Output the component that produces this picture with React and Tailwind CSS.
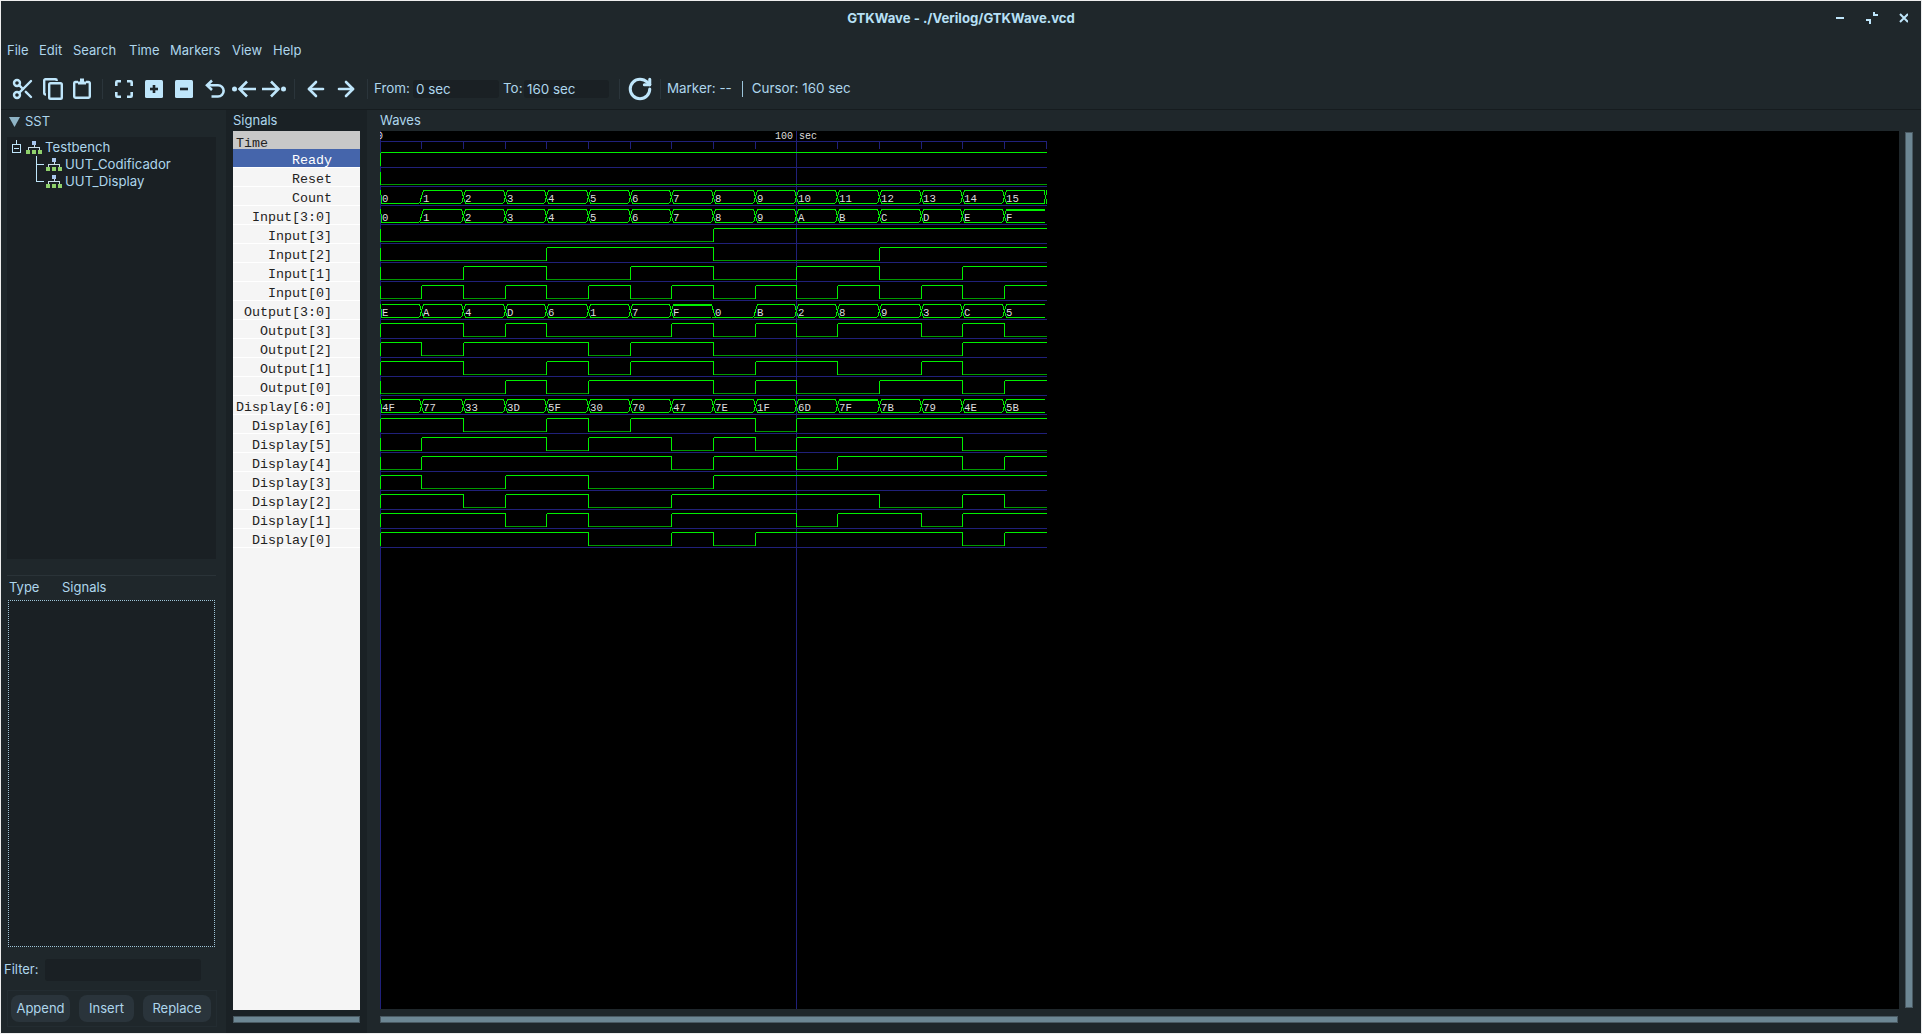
import React from "react";
import { Scissors, RotateCw, ArrowLeft, ArrowRight } from "lucide-react";

const IC = "#bfe6fb";
const XS = [0, 41, 83, 125, 166, 208, 250, 291, 333, 375, 416, 457, 499, 541, 582, 624, 666];
const HIGH = "#00f000";
const LOW = "#009a00";
const BLUE = "#20207a";
const MONO = "'Liberation Mono', monospace";

const input = [...Array(16).keys()];
const output = [0xe, 0xa, 4, 0xd, 6, 1, 7, 0xf, 0, 0xb, 2, 8, 9, 3, 0xc, 5];
const display = [0x4f, 0x77, 0x33, 0x3d, 0x5f, 0x30, 0x70, 0x47, 0x7e, 0x1f, 0x6d, 0x7f, 0x7b, 0x79, 0x4e, 0x5b];
const hex = (v) => v.toString(16).toUpperCase();
const bit = (arr, b) => arr.map((v) => (v >> b) & 1);

const rows = [
  { name: "Ready", d: Array(16).fill(1) },
  { name: "Reset", d: Array(16).fill(0) },
  { name: "Count", v: input, t: input.map(String), cont: true },
  { name: "Input[3:0]", v: input, t: input.map(hex), max: 15 },
  { name: "Input[3]", d: bit(input, 3) },
  { name: "Input[2]", d: bit(input, 2) },
  { name: "Input[1]", d: bit(input, 1) },
  { name: "Input[0]", d: bit(input, 0) },
  { name: "Output[3:0]", v: output, t: output.map(hex), max: 15 },
  { name: "Output[3]", d: bit(output, 3) },
  { name: "Output[2]", d: bit(output, 2) },
  { name: "Output[1]", d: bit(output, 1) },
  { name: "Output[0]", d: bit(output, 0) },
  { name: "Display[6:0]", v: display, t: display.map(hex), max: 127 },
  { name: "Display[6]", d: bit(display, 6) },
  { name: "Display[5]", d: bit(display, 5) },
  { name: "Display[4]", d: bit(display, 4) },
  { name: "Display[3]", d: bit(display, 3) },
  { name: "Display[2]", d: bit(display, 2) },
  { name: "Display[1]", d: bit(display, 1) },
  { name: "Display[0]", d: bit(display, 0) },
];

function Digital({ d, yb }) {
  const hi = yb - 15;
  const lo = yb - 2;
  const parts = [];
  parts.push(<line key="s" x1={0.5} x2={0.5} y1={hi} y2={lo} stroke={HIGH} />);
  d.forEach((b, i) => {
    const x1 = XS[i] + 0.5;
    const x2 = i === 15 ? 667 : XS[i + 1] + 0.5;
    parts.push(<line key={"h" + i} x1={x1} x2={x2} y1={b ? hi : lo} y2={b ? hi : lo} stroke={b ? HIGH : LOW} />);
    if (i > 0 && d[i - 1] !== b) parts.push(<line key={"v" + i} x1={x1} x2={x1} y1={hi} y2={lo} stroke={HIGH} />);
  });
  return <g>{parts}</g>;
}

function Vector({ r, yb }) {
  const top = yb - 15;
  const bot = yb - 2;
  const parts = [];
  const tops = r.v.map((v) => (v === 0 ? bot : top));
  r.v.forEach((v, i) => {
    const a = XS[i] + 2;
    const b = i === 15 ? 665 : XS[i + 1] - 2;
    parts.push(<line key={"b" + i} x1={a} x2={b} y1={bot} y2={bot} stroke={HIGH} />);
    if (v !== 0) parts.push(<line key={"t" + i} x1={a} x2={b} y1={top} y2={top} stroke={HIGH} />);
    if (v === r.max) parts.push(<line key={"th" + i} x1={a} x2={b} y1={top + 1} y2={top + 1} stroke={HIGH} />);
    if (i > 0) {
      const x = XS[i] + 0.5;
      parts.push(<line key={"x1" + i} x1={x - 2} x2={x + 2} y1={tops[i - 1]} y2={bot} stroke={HIGH} />);
      parts.push(<line key={"x2" + i} x1={x - 2} x2={x + 2} y1={bot} y2={tops[i]} stroke={HIGH} />);
    }
    parts.push(
      <text key={"l" + i} x={XS[i] + 2} y={yb - 4} fontSize="10.67" fill="#dddddd" fontFamily={MONO}>
        {r.t[i]}
      </text>
    );
  });
  parts.push(<line key="s1" x1={0.5} x2={2} y1={top} y2={bot} stroke={HIGH} />);
  parts.push(<line key="s2" x1={0.5} x2={2} y1={bot} y2={bot} stroke={HIGH} />);
  if (r.cont) {
    parts.push(<line key="c1" x1={664} x2={667} y1={top} y2={bot} stroke={HIGH} />);
    parts.push(<line key="c2" x1={664} x2={667} y1={bot} y2={top} stroke={HIGH} />);
  }
  return <g>{parts}</g>;
}

function Waves() {
  return (
    <svg width="1519" height="878" className="block bg-black" shapeRendering="crispEdges">
      <line x1={0} x2={667} y1={10.5} y2={10.5} stroke={BLUE} />
      {XS.map((x) => (
        <line key={x} x1={x + 0.5} x2={x + 0.5} y1={10} y2={18} stroke={BLUE} />
      ))}
      {rows.map((_, i) => (
        <line key={i} x1={0} x2={667} y1={36.5 + 19 * i} y2={36.5 + 19 * i} stroke={BLUE} />
      ))}
      <line x1={0.5} x2={0.5} y1={0} y2={878} stroke={BLUE} />
      <line x1={416.5} x2={416.5} y1={0} y2={878} stroke={BLUE} />
      <text x={-3} y={8} fontSize="10" fill="#dddddd" fontFamily={MONO}>0</text>
      <text x={395} y={8} fontSize="10" fill="#dddddd" fontFamily={MONO}>100</text>
      <text x={419} y={8} fontSize="10" fill="#dddddd" fontFamily={MONO}>sec</text>
      {rows.map((r, i) =>
        r.d ? <Digital key={i} d={r.d} yb={36.5 + 19 * i} /> : <Vector key={i} r={r} yb={36.5 + 19 * i} />
      )}
    </svg>
  );
}

const Sep = ({ cls }) => <div className={"w-px h-[20px] bg-[#2b353b] shrink-0 " + cls} />;

function CopyIcon() {
  return (
    <svg width="20" height="22" viewBox="0 0 20 22" fill="none" stroke={IC} strokeWidth="2.4">
      <path d="M3 16.5H2.4A1.2 1.2 0 0 1 1.2 15.3V2.4A1.2 1.2 0 0 1 2.4 1.2H12.5A1.2 1.2 0 0 1 13.7 2.4V3" />
      <rect x="6.2" y="5.2" width="12.6" height="15.6" rx="1.3" />
    </svg>
  );
}
function PasteIcon() {
  return (
    <svg width="18" height="21" viewBox="0 0 18 21" fill="none" stroke={IC} strokeWidth="2.4">
      <path d="M5 4H2.2A1.2 1.2 0 0 0 1.2 5.2V18.6A1.2 1.2 0 0 0 2.4 19.8H15.6A1.2 1.2 0 0 0 16.8 18.6V5.2A1.2 1.2 0 0 0 15.6 4H13" />
      <path d="M5 6.5H13V3.5H11V0.4H7V3.5H5Z" fill={IC} stroke="none" />
    </svg>
  );
}
function FitIcon() {
  return (
    <svg width="18" height="18" viewBox="0 0 18 18" fill="none" stroke={IC} strokeWidth="2.6">
      <path d="M1.3 6V2.2A.9.9 0 0 1 2.2 1.3H6M12 1.3H15.8A.9.9 0 0 1 16.7 2.2V6M16.7 12V15.8A.9.9 0 0 1 15.8 16.7H12M6 16.7H2.2A.9.9 0 0 1 1.3 15.8V12" />
    </svg>
  );
}
function BoxIcon({ plus }) {
  return (
    <svg width="18" height="18" viewBox="0 0 18 18">
      <rect width="18" height="18" rx="1.5" fill={IC} />
      <rect x="5" y="7.7" width="8" height="2.6" fill="#1f272b" />
      {plus && <rect x="7.7" y="5" width="2.6" height="8" fill="#1f272b" />}
    </svg>
  );
}
function UndoIcon() {
  return (
    <svg width="20" height="20" viewBox="0 0 20 20" fill="none" stroke={IC} strokeWidth="2.6">
      <path d="M7 1.5L2 6.2L7 11" />
      <path d="M2.5 6.2H13A5.5 5.5 0 0 1 13 17.5H6.5" />
    </svg>
  );
}
function DotArrow({ right }) {
  return (
    <svg width="24" height="18" viewBox="0 0 24 18" fill="none" stroke={IC} strokeWidth="2.6" style={right ? { transform: "scaleX(-1)" } : undefined}>
      <circle cx="2.5" cy="9" r="2.5" fill={IC} stroke="none" />
      <path d="M15 1.5L7.5 9L15 16.5M8 9H24" />
    </svg>
  );
}
function TreeIcon() {
  return (
    <svg width="16" height="13" viewBox="0 0 16 13" className="shrink-0" shapeRendering="crispEdges">
      <rect x="6" y="0" width="4" height="4" fill="#a9c6ee" />
      <rect x="7.5" y="4" width="1" height="3" fill="#c8dbe6" />
      <rect x="2" y="6" width="12" height="1" fill="#c8dbe6" />
      <rect x="2" y="6" width="1" height="3" fill="#c8dbe6" />
      <rect x="13" y="6" width="1" height="3" fill="#c8dbe6" />
      <rect x="0" y="9" width="4" height="4" fill="#8fd06c" />
      <rect x="6" y="9" width="4" height="4" fill="#8fd06c" />
      <rect x="12" y="9" width="4" height="4" fill="#8fd06c" />
    </svg>
  );
}
function Connector({ last }) {
  return (
    <svg width="8" height="17" viewBox="0 0 8 17" className="shrink-0" shapeRendering="crispEdges" fill="none" stroke={IC}>
      <path d={last ? "M0.5 0V8.5H8" : "M0.5 0V17M0.5 8.5H8"} />
    </svg>
  );
}

function TitleBar() {
  return (
    <div className="grid grid-cols-[1fr_auto_1fr] items-center h-[34px] shrink-0">
      <div />
      <div className="font-bold text-[13.15px] text-[#b7e0f6] pt-[2px]">GTKWave - ./Verilog/GTKWave.vcd</div>
      <div className="flex items-center justify-end pr-[13px] pt-[2px]">
        <svg width="72" height="14" viewBox="0 0 72 14" shapeRendering="crispEdges" fill={IC}>
          <rect x="0" y="5" width="8" height="2" />
          <path d="M37 0h2v2h3v2h-5zM30 7h5v5h-2V9h-3z" />
          <path d="M64 2l8 8M72 2l-8 8" stroke={IC} strokeWidth="2" shapeRendering="auto" fill="none" />
        </svg>
      </div>
    </div>
  );
}

function MenuBar() {
  const items = [["File", "w-[32px]"], ["Edit", "w-[34px]"], ["Search", "w-[56px]"], ["Time", "w-[41px]"], ["Markers", "w-[62px]"], ["View", "w-[41px]"], ["Help", "w-[40px]"]];
  return (
    <div className="flex items-center h-[31px] pl-[6px] shrink-0 text-[13px]">
      {items.map(([t, w]) => (
        <span key={t} className={w}>{t}</span>
      ))}
    </div>
  );
}

function Toolbar() {
  return (
    <div className="flex items-center h-[44px] pt-[2px] shrink-0 border-b border-[#161c1f] pl-[10px] text-[13.4px]">
      <Scissors size={24} color={IC} strokeWidth={2.4} className="shrink-0" />
      <div className="ml-[8px]"><CopyIcon /></div>
      <div className="ml-[10px]"><PasteIcon /></div>
      <Sep cls="ml-[11px]" />
      <div className="ml-[12px]"><FitIcon /></div>
      <div className="ml-[12px]"><BoxIcon plus /></div>
      <div className="ml-[12px]"><BoxIcon /></div>
      <div className="ml-[12px]"><UndoIcon /></div>
      <div className="ml-[7px]"><DotArrow /></div>
      <div className="ml-[6px]"><DotArrow right /></div>
      <Sep cls="ml-[8px]" />
      <ArrowLeft size={24} color={IC} strokeWidth={2.6} className="ml-[9px]" />
      <ArrowRight size={24} color={IC} strokeWidth={2.6} className="ml-[6px]" />
      <Sep cls="ml-[9px]" />
      <span className="ml-[6px] w-[39px]">From:</span>
      <div className="w-[86px] h-[18px] bg-[#1a2024] rounded-[3px] pl-[3px] leading-[19px]">0 sec</div>
      <span className="ml-[4px] w-[21px]">To:</span>
      <div className="w-[85px] h-[18px] bg-[#1a2024] rounded-[3px] pl-[3px] leading-[19px]">160 sec</div>
      <Sep cls="ml-[10px]" />
      <RotateCw size={26} color={IC} strokeWidth={2.8} className="ml-[7px]" />
      <Sep cls="ml-[7px]" />
      <span className="ml-[6px]">Marker: --</span>
      <span className="ml-[10px] w-px h-[16px] bg-[#9cc5db]" />
      <span className="ml-[9px]">Cursor: 160 sec</span>
    </div>
  );
}

function LeftPanel() {
  return (
    <div className="w-[225px] shrink-0 flex flex-col pl-[6px] pr-[10px]">
      <div className="h-[27px] flex items-center pl-[2px] pb-[4px] shrink-0">
        <svg width="11" height="10" viewBox="0 0 11 10"><path d="M0 0H11L5.5 10Z" fill="#8fb4c6" /></svg>
        <span className="ml-[5px] text-[13px]">SST</span>
      </div>
      <div className="h-[422px] bg-[#1a2024] shrink-0 text-[13.2px] pt-[2px]">
        <div className="flex items-center h-[17px] pl-[5px]">
          <svg width="10" height="16" viewBox="0 0 10 16" fill="none" stroke={IC} strokeWidth="1" shapeRendering="crispEdges" className="shrink-0">
            <rect x="0.5" y="4.5" width="8" height="8" />
            <path d="M2 8.5H7M4.5 0V4" />
          </svg>
          <span className="ml-[4px]"><TreeIcon /></span>
          <span className="ml-[3px]">Testbench</span>
        </div>
        <div className="flex items-center h-[17px] pl-[29px]">
          <Connector />
          <span className="ml-[2px]"><TreeIcon /></span>
          <span className="ml-[3px]">UUT_Codificador</span>
        </div>
        <div className="flex items-center h-[17px] pl-[29px]">
          <Connector last />
          <span className="ml-[2px]"><TreeIcon /></span>
          <span className="ml-[3px]">UUT_Display</span>
        </div>
      </div>
      <div className="h-[16px] shrink-0" />
      <div className="h-[25px] shrink-0 border-t border-[#2a3338] flex items-center text-[13px] pl-[2px]">
        <span className="w-[53px]">Type</span>
        <span>Signals</span>
      </div>
      <div className="h-[347px] ml-[1px] mr-[1px] shrink-0 bg-[#1a2024] border border-dotted border-[#9fc6d9]" />
      <div className="flex items-center h-[22px] mt-[12px] -ml-[3px] shrink-0 text-[13px]">
        <span className="w-[41px]">Filter:</span>
        <div className="w-[156px] h-[22px] bg-[#1a2024] rounded-[3px]" />
      </div>
      <div className="flex items-center gap-[9px] h-[37px] mt-[9px] -mr-[1px] border border-[#232c31] pl-[3px] shrink-0 text-[13px]">
        <span className="w-[59px] h-[27px] rounded-lg bg-[#2a343b] flex items-center justify-center">Append</span>
        <span className="w-[55px] h-[27px] rounded-lg bg-[#2a343b] flex items-center justify-center">Insert</span>
        <span className="w-[68px] h-[27px] rounded-lg bg-[#2a343b] flex items-center justify-center">Replace</span>
      </div>
    </div>
  );
}

function SignalsPanel() {
  return (
    <div className="w-[141px] shrink-0 bg-[#1a2125] flex flex-col pl-[7px] pr-[7px]">
      <div className="h-[21px] flex items-center text-[13px] shrink-0 pt-[1px]">Signals</div>
      <div className="w-[127px] h-[879px] bg-[#f5f5f5] shrink-0 font-['Liberation_Mono',monospace] text-[13.33px] text-[#222]">
        <div className="h-[18px] bg-[#c8c8c8] pl-[3px] pt-[4px] leading-[17px]">Time</div>
        {rows.map((r, i) => (
          <div
            key={r.name}
            className={
              "h-[19px] border-b border-white text-right pr-[28px] pt-[3px] leading-[17px] whitespace-pre " +
              (i === 0 ? "bg-[#4565ab] text-white" : "")
            }
          >
            {r.name}
          </div>
        ))}
      </div>
      <div className="w-[127px] h-[7px] mt-[6px] bg-[#6d8794] border border-[#4a5a63] shrink-0" />
    </div>
  );
}

function WavesPanel() {
  return (
    <div className="flex-1 flex flex-col pl-[13px]">
      <div className="h-[21px] flex items-center text-[13px] shrink-0 pt-[1px]">Waves</div>
      <div className="flex shrink-0">
        <Waves />
        <div className="w-[8px] h-[876px] mt-[1px] ml-[6px] bg-[#6d8794] border border-[#4a5a63]" />
      </div>
      <div className="w-[1518px] h-[7px] mt-[7px] bg-[#6d8794] border border-[#4a5a63] shrink-0" />
    </div>
  );
}

export default function App() {
  return (
    <div className="w-[1922px] h-[1034px] bg-[#eeeeee] pt-px pr-px pb-px pl-px overflow-hidden font-['Inter',sans-serif] text-[#aed6ec]">
      <div className="h-full flex flex-col bg-[#1f272b]">
        <TitleBar />
        <MenuBar />
        <Toolbar />
        <div className="flex flex-1 min-h-0">
          <LeftPanel />
          <SignalsPanel />
          <WavesPanel />
        </div>
      </div>
    </div>
  );
}
